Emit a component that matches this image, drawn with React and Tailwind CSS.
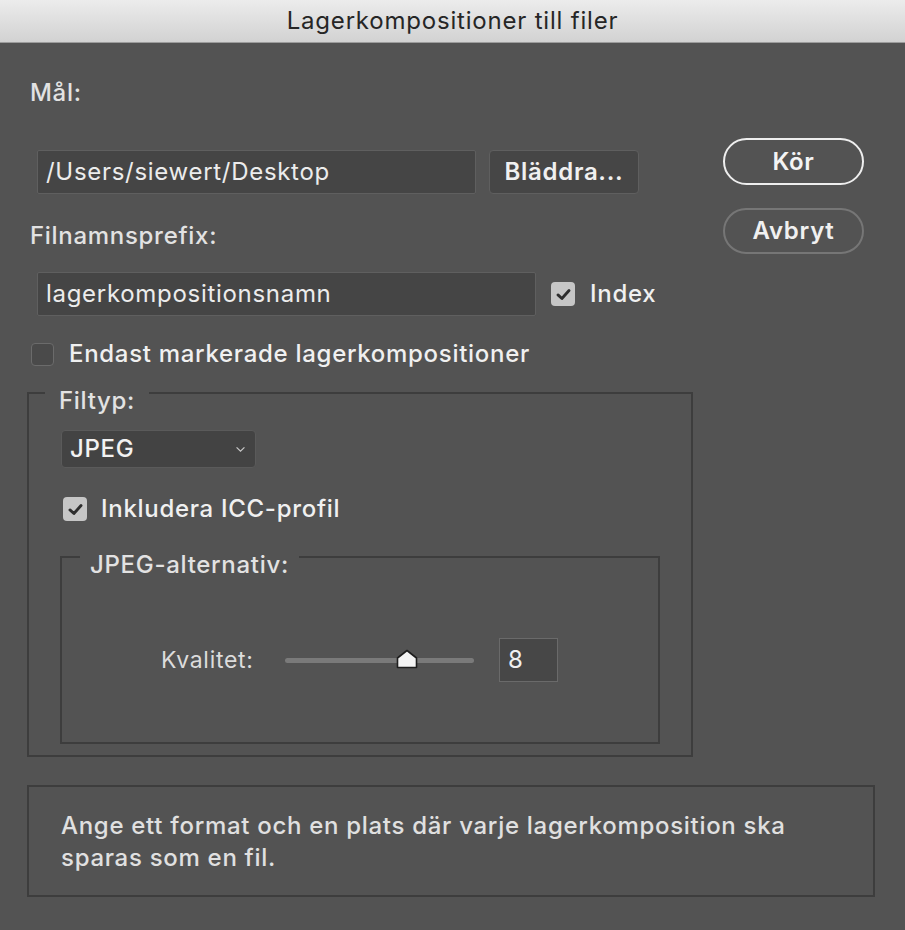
import React from "react";

const font = { fontFamily: "Inter, 'Noto Sans', 'Liberation Sans', sans-serif" };

function Check({ checked, className = "" }) {
  if (checked) {
    return (
      <div className={"flex items-center justify-center rounded-[4px] bg-[#c6c6c6] " + className}>
        <svg viewBox="0 0 24 24" className="w-[19px] h-[19px]">
          <path d="M5 12.5 L10 17 L19 7" fill="none" stroke="#2e2e2e" strokeWidth="3.6" strokeLinecap="round" strokeLinejoin="round" />
        </svg>
      </div>
    );
  }
  return <div className={"rounded-[4px] bg-[#4a4a4a] border border-[#6b6b6b] " + className} />;
}

export default function App() {
  return (
    <div className="w-[905px] h-[930px] bg-[#535353] text-[#e2e2e2] overflow-hidden tracking-[0.7px]" style={font}>
      <div className="h-[43px] bg-gradient-to-b from-[#ececec] to-[#d2d2d2] border-b border-[#9c9c9c] flex items-center justify-center">
        <span className="text-[24px] text-[#262626] tracking-[0.8px]">Lagerkompositioner till filer</span>
      </div>

      <div className="pl-[27px]">
        <div className="flex">
          <div className="w-[666px] flex flex-col">
            <div className="ml-[3px] mt-[36px] h-[28px] leading-[28px] text-[24px] font-medium">Mål:</div>

            <div className="mt-[43px] ml-[10px] flex items-center gap-[13px]">
              <div className="w-[439px] h-[44px] bg-[#454545] border border-[#5f5f5f] rounded-[2px] flex items-center pl-[8px] text-[24px] text-[#ececec]">
                /Users/siewert/Desktop
              </div>
              <div className="w-[150px] h-[44px] bg-[#464646] border border-[#5f5f5f] rounded-[4px] flex items-center justify-center text-[24px] font-semibold text-[#f0f0f0]">
                Bläddra...
              </div>
            </div>

            <div className="ml-[3px] mt-[28px] h-[28px] leading-[28px] text-[24px] font-medium">Filnamnsprefix:</div>

            <div className="mt-[22px] ml-[10px] flex items-center">
              <div className="w-[499px] h-[44px] bg-[#454545] border border-[#5f5f5f] rounded-[2px] flex items-center pl-[8px] text-[24px] text-[#ececec]">
                lagerkompositionsnamn
              </div>
              <Check checked className="ml-[15px] w-[24px] h-[24px]" />
              <span className="ml-[15px] text-[24px] font-medium text-[#f0f0f0]">Index</span>
            </div>

            <div className="mt-[24px] ml-[4px] h-[28px] flex items-center">
              <Check className="w-[23px] h-[23px]" />
              <span className="ml-[15px] text-[24px] font-medium text-[#f0f0f0]">Endast markerade lagerkompositioner</span>
            </div>

            <fieldset className="mt-[3px] w-[666px] border-2 border-[#3d3d3d] p-0 m-0">
              <legend className="ml-[16px] px-[14px] pt-[16px] leading-[28px] text-[24px] font-medium">Filtyp:</legend>
              <div className="pl-[32px] pb-[11px] flex flex-col">
                <div className="mt-[15px] w-[195px] h-[38px] bg-[#434343] border border-[#5a5a5a] rounded-[4px] flex items-center justify-between pl-[8px] pr-[9px]">
                  <span className="text-[24px] font-medium text-[#f2f2f2]">JPEG</span>
                  <svg viewBox="0 0 12 8" className="w-[11px] h-[7px]">
                    <path d="M1.5 1.5 L6 6 L10.5 1.5" fill="none" stroke="#c8c8c8" strokeWidth="1.4" />
                  </svg>
                </div>

                <div className="mt-[27px] ml-[2px] h-[28px] flex items-center">
                  <Check checked className="w-[24px] h-[24px]" />
                  <span className="ml-[14px] text-[24px] font-medium text-[#f0f0f0]">Inkludera ICC-profil</span>
                </div>

                <fieldset className="mt-[12px] -ml-[1px] w-[600px] border-2 border-[#3d3d3d] p-0 m-0">
                  <legend className="ml-[18px] px-[10px] pt-[16px] leading-[28px] text-[24px] font-medium">JPEG-alternativ:</legend>
                  <div className="pl-[99px] pt-[59px] pb-[60px] flex items-center">
                    <span className="w-[96px] text-[23px] text-[#dcdcdc] whitespace-nowrap">Kvalitet:</span>
                    <div className="ml-[28px] relative w-[189px] h-[5px] rounded-full bg-[#7a7a7a]">
                      <svg viewBox="0 0 22 20" className="absolute w-[22px] h-[20px] left-[111px] top-[-9px]">
                        <path d="M1.5 18.5 L1.5 9 L11 1.5 L20.5 9 L20.5 18.5 Z" fill="#f4f4f4" stroke="#1e1e1e" strokeWidth="1.6" strokeLinejoin="round" />
                      </svg>
                    </div>
                    <div className="ml-[25px] w-[59px] h-[44px] bg-[#474747] border border-[#6a6a6a] flex items-center pl-[8px] text-[24px] text-[#f0f0f0]">
                      8
                    </div>
                  </div>
                </fieldset>
              </div>
            </fieldset>
          </div>

          <div className="ml-[30px] pt-[95px] flex flex-col gap-[23px]">
            <div className="w-[141px] h-[47px] rounded-full border-2 border-[#eeeeee] flex items-center justify-center text-[24px] font-semibold text-[#f4f4f4]">
              Kör
            </div>
            <div className="w-[141px] h-[46px] rounded-full border-2 border-[#767676] flex items-center justify-center text-[24px] font-semibold text-[#f0f0f0]">
              Avbryt
            </div>
          </div>
        </div>

        <div className="mt-[28px] w-[848px] h-[112px] border-2 border-[#3d3d3d] pl-[32px] pt-[23px] text-[24px] leading-[32px] text-[#e0e0e0] font-medium">
          Ange ett format och en plats där varje lagerkomposition ska<br />sparas som en fil.
        </div>
      </div>
    </div>
  );
}
